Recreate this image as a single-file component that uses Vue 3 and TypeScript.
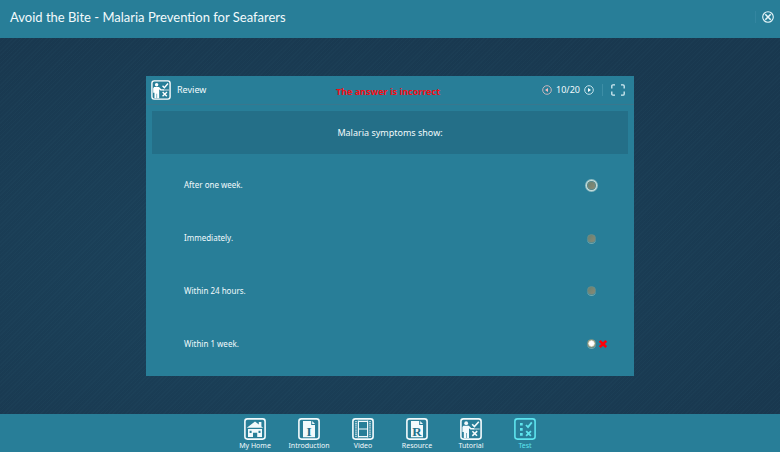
<script setup lang="ts">
import { ref } from 'vue'

interface Answer {
  text: string
  correct: boolean
}

const answers: Answer[] = [
  { text: 'After one week.', correct: true },
  { text: 'Immediately.', correct: false },
  { text: 'Within 24 hours.', correct: false },
  { text: 'Within 1 week.', correct: false },
]
const chosen = ref(3)

const tabs = ['My Home', 'Introduction', 'Video', 'Resource', 'Tutorial', 'Test']
const activeTab = ref('Test')
</script>

<template>
  <div class="app">
    <header class="topbar">
      <h1>Avoid the Bite - Malaria Prevention for Seafarers</h1>
      <button class="close" type="button" aria-label="Close">
        <svg width="12" height="12" viewBox="0 0 12 12" fill="none" stroke="#e8f6fa">
          <circle cx="6" cy="6" r="5.3" stroke-width="1.1" />
          <path d="M3.3 3.3l5.4 5.4M8.7 3.3l-5.4 5.4" stroke-width="1.6" />
        </svg>
      </button>
    </header>

    <main class="stage">
      <section class="panel">
        <div class="panel-head">
          <div class="head-left">
            <svg class="badge" width="20" height="20" viewBox="0 0 22 22">
              <rect x="1" y="1" width="20" height="20" rx="2.5" fill="none" stroke="#fff" stroke-width="1.5" />
              <circle cx="6.2" cy="5.2" r="1.9" fill="#fff" />
              <path d="M3.4 7.8h5.4l2.4 2.3h3v1.4h-3.8L9 10.3V20H6.7v-5h-.6v5H3.8v-6H2.4V9z" fill="#fff" />
              <path d="M13.5 11h6.2" stroke="#fff" stroke-width=".8" />
              <path d="M12.7 6.3l2 2.1 4-4.6M12.8 13.2l4.6 4.7M17.6 13.2l-4.9 4.7" fill="none" stroke="#fff" stroke-width="1.5" />
            </svg>
            <h2>Review</h2>
          </div>
          <p class="verdict" role="status">The answer is incorrect</p>
          <div class="head-right">
            <button type="button" aria-label="Previous question">
              <svg width="10" height="10" viewBox="0 0 10 10">
                <circle cx="5" cy="5" r="4.3" fill="none" stroke="#c5b7bd" stroke-width="1" />
                <path d="M3 5l3-2v4z" fill="#fbb" />
              </svg>
            </button>
            <span class="count">10/20</span>
            <button type="button" aria-label="Next question">
              <svg width="10" height="10" viewBox="0 0 10 10">
                <circle cx="5" cy="5" r="4.3" fill="none" stroke="#c4e3eb" stroke-width="1" />
                <path d="M7 5L4 3v4z" fill="#fff" />
              </svg>
            </button>
            <span class="rule"></span>
            <button type="button" aria-label="Full screen">
              <svg width="14" height="12" viewBox="0 0 14 12" fill="none" stroke="#d5edf3" stroke-width="1.3">
                <path d="M4 .8H2Q.8.8.8 2v2.4M10 .8h2q1.2 0 1.2 1.2v2.4M4 11.2H2Q.8 11.2.8 10V7.6M10 11.2h2q1.2 0 1.2-1.2V7.6" />
              </svg>
            </button>
          </div>
        </div>

        <fieldset class="quiz">
          <legend class="question">Malaria symptoms show:</legend>
          <div class="answers">
            <div v-for="(answer, i) in answers" :key="answer.text" class="answer">
              <label :for="`answer-${i}`">{{ answer.text }}</label>
              <input
                :id="`answer-${i}`"
                v-model="chosen"
                type="radio"
                name="answer"
                :value="i"
                :class="{ correct: answer.correct }"
              />
              <span class="mark">
                <svg v-if="chosen === i && !answer.correct" width="8" height="8" viewBox="0 0 8 8">
                  <path d="M.8 1l6.4 6M7.2 1L.8 7" stroke="#ff0008" stroke-width="2.5" />
                </svg>
              </span>
            </div>
          </div>
        </fieldset>
      </section>
    </main>

    <nav class="tabs" aria-label="Course sections">
      <a
        v-for="tab in tabs"
        :key="tab"
        href="#"
        :class="{ active: tab === activeTab }"
        @click.prevent="activeTab = tab"
      >
        <svg width="22" height="22" viewBox="0 0 22 22">
          <rect x=".9" y=".9" width="20.2" height="20.2" rx="2.5" fill="none" stroke="currentColor" stroke-width="1.6" />
          <g v-if="tab === 'My Home'" fill="currentColor">
            <path d="M2.8 9.8L11 3.6l3.8 2.9V4h2.6v4.4l1.9 1.4z" />
            <path fill-rule="evenodd" d="M4 11h14v8h-4.8v-4.3H9V19H4zM5.6 12.8v2.2h2v-2.2zM14.5 12.8v2.2h2v-2.2z" />
          </g>
          <g v-else-if="tab === 'Introduction' || tab === 'Resource'">
            <path d="M5 3h8.2v4H17v12.2H5z" fill="currentColor" />
            <path d="M14.2 3L17 5.9h-2.8z" fill="currentColor" />
            <text x="11" y="17.6" text-anchor="middle" class="letter">{{ tab[0] }}</text>
          </g>
          <g v-else-if="tab === 'Video'" fill="none" stroke="currentColor">
            <path d="M6.4 2.6v16.8M15.6 2.6v16.8M6.4 3.4h9.2M6.4 11h9.2M6.4 18.6h9.2" stroke-width="1.2" />
            <path d="M4 3v16.4M18 3v16.4" stroke-width="1.7" stroke-opacity=".75" stroke-dasharray="1.3 .8" />
          </g>
          <g v-else-if="tab === 'Tutorial'" fill="currentColor">
            <circle cx="6.2" cy="5.2" r="1.9" />
            <path d="M3.4 7.8h5.4l2.4 2.3h3v1.4h-3.8L9 10.3V20H6.7v-5h-.6v5H3.8v-6H2.4V9z" />
            <path d="M13.5 11h6.2" stroke="currentColor" stroke-width=".8" />
            <path d="M12.2 6.3l2.2 2.2 4.4-4.8M12.4 13.2l4.6 4.6M17.2 13.2l-4.9 4.6" fill="none" stroke="currentColor" stroke-width="1.6" />
          </g>
          <g v-else>
            <path d="M6 4.9h2.7v2.7H6zM6 10h2.7v2.7H6zM6 15.1h2.7v2.7H6z" fill="currentColor" />
            <path d="M12 7l2 2.1 3.8-4.7M12.2 13.2l4.7 4.7M17 13.2l-4.9 4.7" fill="none" stroke="currentColor" stroke-width="1.8" />
          </g>
        </svg>
        <span>{{ tab }}</span>
      </a>
    </nav>
  </div>
</template>

<style>
body {
  margin: 0;
}
</style>

<style scoped>
.app {
  min-height: 100vh;
  display: flex;
  flex-direction: column;
  color: #f2fafc;
  font-family: "Noto Sans", "Open Sans", sans-serif;
  background: #1a3c54;
}

button {
  display: flex;
  padding: 0;
  border: 0;
  background: none;
  color: inherit;
  cursor: pointer;
}

h1,
h2,
p {
  margin: 0;
  font-weight: 400;
}

.topbar {
  display: flex;
  align-items: center;
  justify-content: space-between;
  height: 38px;
  padding: 0 6px 4px 10px;
  box-sizing: border-box;
  background: #287e98;
}

h1 {
  font-family: Lato, "Noto Sans", sans-serif;
  font-size: 13px;
  line-height: 20px;
}

.close {
  padding-left: 6px;
  border-left: 1px solid #3385a0;
}

.stage {
  flex: 1;
  display: flex;
  padding: 38px 146px;
  background:
    repeating-linear-gradient(135deg, rgba(90, 160, 180, 0.03) 0 1px, transparent 1px 3px),
    radial-gradient(ellipse at 38% 60%, #1b435c 0%, #1a3d55 45%, #19384f 80%);
}

.panel {
  flex: 1;
  display: flex;
  flex-direction: column;
  background: #287e98;
}

.panel-head {
  display: grid;
  grid-template-columns: 1fr auto 1fr;
  align-items: center;
  height: 29px;
  padding: 0 9px 0 5px;
  box-sizing: border-box;
  border-bottom: 1px solid #38778e;
}

.head-left,
.head-right {
  display: flex;
  align-items: center;
}

.head-left {
  gap: 6px;
}

.head-right {
  justify-content: flex-end;
  gap: 4px;
}

h2,
.count,
.verdict,
.question {
  font-size: 9px;
  line-height: 16px;
}

.verdict {
  padding-top: 4px;
  color: #f50d14;
  font-weight: 700;
}

.rule {
  width: 1px;
  height: 12px;
  margin: 0 4px;
  background: #3d8ea6;
}

.quiz {
  flex: 1;
  display: flex;
  flex-direction: column;
  min-width: 0;
  margin: 0;
  padding: 6px;
  border: 0;
}

.question {
  float: left;
  width: 100%;
  padding: 14px 0 13px;
  background: #246f88;
  text-align: center;
}

.answers {
  flex: 1;
  display: grid;
  grid-template-rows: repeat(4, 1fr);
  padding: 5px 21px 0 32px;
}

.answer {
  display: flex;
  align-items: center;
}

.answer label {
  flex: 1;
  font-size: 8px;
  line-height: 12px;
}

.answer input {
  appearance: none;
  box-sizing: border-box;
  width: 9px;
  height: 9px;
  margin: 0 3px;
  border-radius: 50%;
  border: 1px solid #6b8d86;
  background: linear-gradient(135deg, #698171, #8a8a75);
  box-shadow: 0 1px 0 #6fa7ae;
}

.answer input:checked {
  border: 1px solid #8b9780;
  background: radial-gradient(circle, #fff 0 2px, #d9d9c6 3px, #929a80 4px);
}

.answer input.correct {
  box-shadow: 0 0 0 1px #c6dddb, 0 0 0 2px #8fbcc2;
}

.mark {
  display: flex;
  width: 8px;
}

.tabs {
  display: flex;
  justify-content: center;
  height: 38px;
  padding-top: 4px;
  box-sizing: border-box;
  background: #287e98;
}

.tabs a {
  display: flex;
  flex-direction: column;
  align-items: center;
  width: 54px;
  color: #f2fafc;
  font-size: 7px;
  line-height: 12px;
  text-decoration: none;
}

.tabs a.active {
  color: #5ee4ee;
}

.letter {
  fill: #23718a;
  font: 700 13px "Liberation Serif", serif;
}
</style>
